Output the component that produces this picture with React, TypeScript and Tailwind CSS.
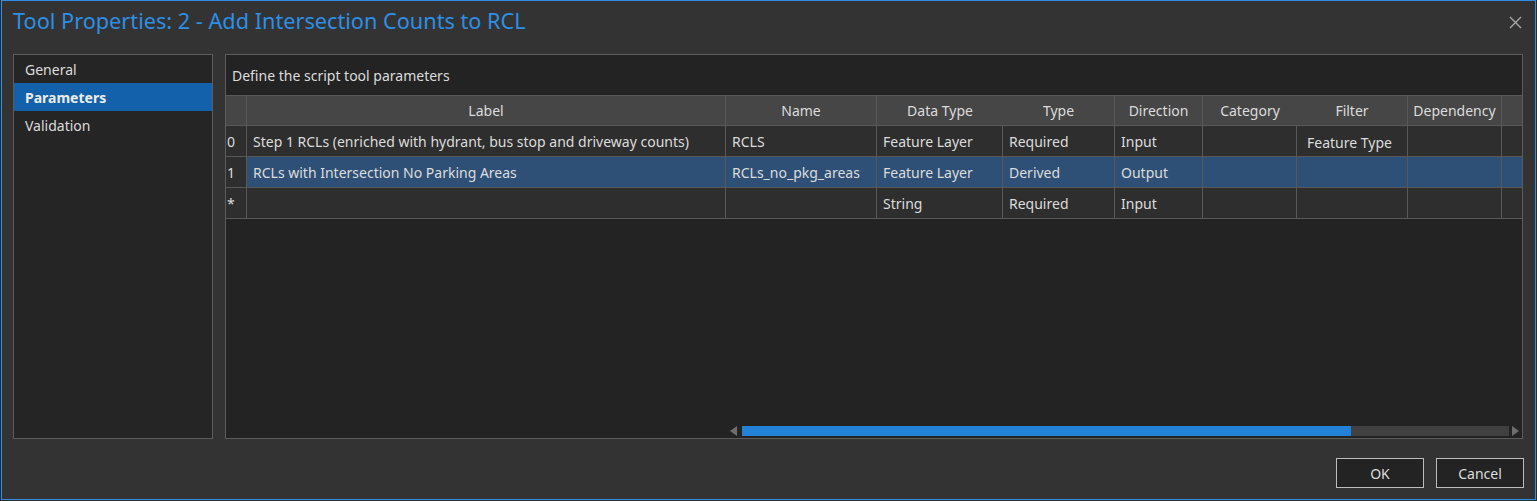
import React from 'react';

const cols = [
  { key: 'label', title: 'Label', w: 'w-[479px]', headLine: true },
  { key: 'name', title: 'Name', w: 'w-[151px]', headLine: true },
  { key: 'dataType', title: 'Data Type', w: 'w-[126px]', headLine: false },
  { key: 'type', title: 'Type', w: 'w-[112px]', headLine: true },
  { key: 'direction', title: 'Direction', w: 'w-[88px]', headLine: true },
  { key: 'category', title: 'Category', w: 'w-[94px]', headLine: false },
  { key: 'filter', title: 'Filter', w: 'w-[111px]', headLine: true },
  { key: 'dependency', title: 'Dependency', w: 'w-[94px]', headLine: true },
];

type Row = {
  idx: string;
  selected?: boolean;
  cells: Record<string, string>;
};

const rows: Row[] = [
  {
    idx: '0',
    cells: {
      label: 'Step 1 RCLs (enriched with hydrant, bus stop and driveway counts)',
      name: 'RCLS',
      dataType: 'Feature Layer',
      type: 'Required',
      direction: 'Input',
      category: '',
      filter: 'Feature Type',
      dependency: '',
    },
  },
  {
    idx: '1',
    selected: true,
    cells: {
      label: 'RCLs with Intersection No Parking Areas',
      name: 'RCLs_no_pkg_areas',
      dataType: 'Feature Layer',
      type: 'Derived',
      direction: 'Output',
      category: '',
      filter: '',
      dependency: '',
    },
  },
  {
    idx: '*',
    cells: {
      label: '',
      name: '',
      dataType: 'String',
      type: 'Required',
      direction: 'Input',
      category: '',
      filter: '',
      dependency: '',
    },
  },
];

const navItems = ['General', 'Parameters', 'Validation'];

export default function App() {
  return (
    <div
      className="w-[1537px] h-[501px] bg-[#2b2b2b] text-[#dcdcdc] text-[14px] overflow-hidden"
      style={{ fontFamily: '"Noto Sans", "Open Sans", sans-serif' }}
    >
      <div className="ml-[1px] w-[1535px] h-[500px] border border-[#2f8fe6] bg-[#333333] flex flex-col">
        {/* title bar */}
        <div className="h-[53px] flex items-start justify-between pl-[11px] pr-[12px]">
          <h1 className="mt-[5px] text-[21.7px] leading-[30px] text-[#2d8fe6] font-normal">
            Tool Properties: 2 - Add Intersection Counts to RCL
          </h1>
          <button className="mt-[13px] w-[16px] h-[16px] flex items-center justify-center">
            <svg width="13" height="13" viewBox="0 0 13 13">
              <path d="M1 1 L12 12 M12 1 L1 12" stroke="#a8a8a8" strokeWidth="1.4" />
            </svg>
          </button>
        </div>

        {/* panels */}
        <div className="flex gap-[12px] px-[11px] h-[385px]">
          <div className="w-[200px] h-full border border-[#5c5c5c] bg-[#252525]">
            {navItems.map((item) => (
              <div
                key={item}
                className={
                  item === 'Parameters'
                    ? 'h-[28px] flex items-center pl-[11px] bg-[#1261aa] font-bold text-[#ececec]'
                    : 'h-[28px] flex items-center pl-[11px]'
                }
              >
                {item}
              </div>
            ))}
          </div>

          <div className="w-[1298px] h-full border border-[#5c5c5c] bg-[#232323] flex flex-col">
            <div className="h-[40px] flex items-center pl-[6px]">Define the script tool parameters</div>

            {/* header */}
            <div className="flex h-[31px] border-y border-[#585858] bg-[#464646]">
              <div className="w-[21px] border-r border-[#585858]" />
              {cols.map((c) => (
                <div
                  key={c.key}
                  className={
                    c.headLine
                      ? `${c.w} flex items-center justify-center border-r border-[#585858]`
                      : `${c.w} flex items-center justify-center`
                  }
                >
                  {c.title}
                </div>
              ))}
              <div className="flex-1" />
            </div>

            {/* rows */}
            {rows.map((r) => (
              <div key={r.idx} className="flex h-[31px] border-b border-[#585858] bg-[#2e2e2e]">
                <div className="w-[21px] border-r border-[#585858] flex items-center pl-[1px]">{r.idx}</div>
                <div className={r.selected ? 'flex flex-1 bg-[#2f5076]' : 'flex flex-1'}>
                  {cols.map((c) => (
                    <div
                      key={c.key}
                      className={
                        c.key === 'filter'
                          ? `${c.w} border-r border-[#585858] flex items-center pl-[10px] pt-[2px]`
                          : `${c.w} border-r border-[#585858] flex items-center pl-[6px]`
                      }
                    >
                      {r.cells[c.key]}
                    </div>
                  ))}
                  <div className="flex-1" />
                </div>
              </div>
            ))}

            <div className="flex-1" />

            {/* horizontal scrollbar */}
            <div className="flex items-center h-[10px] mb-[2px] pl-[502px] pr-[1px]">
              <svg width="10" height="10" viewBox="0 0 10 10" className="mr-[4px]">
                <path d="M9 0 L9 10 L2 5 Z" fill="#6e6e6e" />
              </svg>
              <div className="flex-1 h-[10px] bg-[#404040] flex">
                <div className="w-[609px] h-full bg-[#2282d8]" />
              </div>
              <svg width="12" height="10" viewBox="0 0 12 10">
                <path d="M3 0 L3 10 L10 5 Z" fill="#6e6e6e" />
              </svg>
            </div>
          </div>
        </div>

        {/* buttons */}
        <div className="flex justify-end gap-[12px] pr-[11px] mt-[19px]">
          <button className="w-[88px] h-[30px] border border-[#bdbdbd] bg-[#232323] text-[#dcdcdc]">OK</button>
          <button className="w-[88px] h-[30px] border border-[#bdbdbd] bg-[#232323] text-[#dcdcdc]">Cancel</button>
        </div>
      </div>
    </div>
  );
}
